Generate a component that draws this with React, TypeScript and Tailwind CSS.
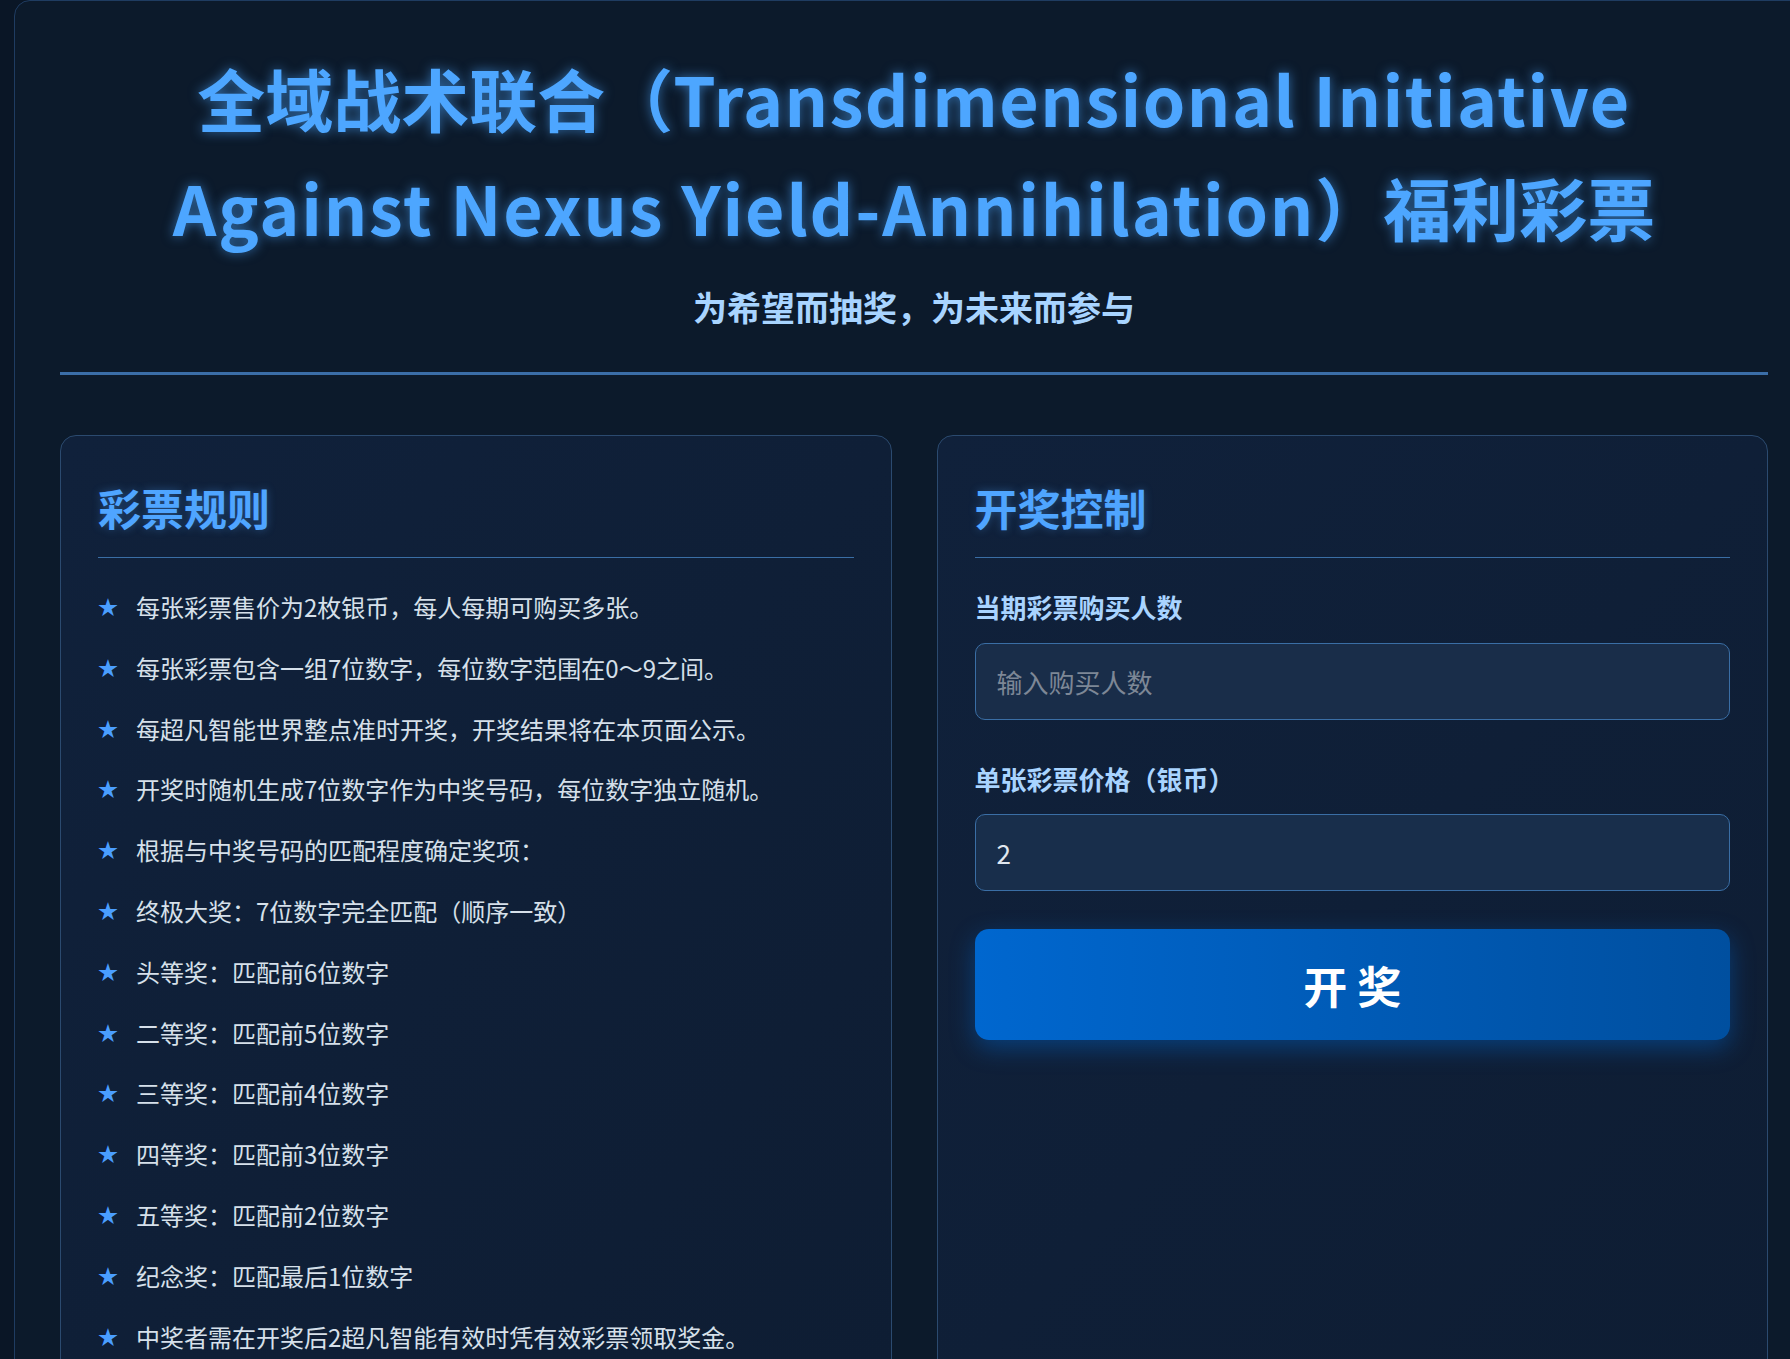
import React from 'react';

const rules = [
  '每张彩票售价为2枚银币，每人每期可购买多张。',
  '每张彩票包含一组7位数字，每位数字范围在0～9之间。',
  '每超凡智能世界整点准时开奖，开奖结果将在本页面公示。',
  '开奖时随机生成7位数字作为中奖号码，每位数字独立随机。',
  '根据与中奖号码的匹配程度确定奖项：',
  '终极大奖：7位数字完全匹配（顺序一致）',
  '头等奖：匹配前6位数字',
  '二等奖：匹配前5位数字',
  '三等奖：匹配前4位数字',
  '四等奖：匹配前3位数字',
  '五等奖：匹配前2位数字',
  '纪念奖：匹配最后1位数字',
  '中奖者需在开奖后2超凡智能有效时凭有效彩票领取奖金。',
];

const CardTitle: React.FC<{ children: React.ReactNode }> = ({ children }) => (
  <h2 className="border-b border-[#3a6ea5] pb-[18px] text-[43px] font-bold leading-[1.5] text-[#4fa5ff] [text-shadow:0_0_8px_rgba(77,163,255,0.35)]">
    {children}
  </h2>
);

export default function App() {
  return (
    <div className="h-screen overflow-hidden bg-[#0a1626] font-['Noto_Sans_CJK_SC',sans-serif]">
      <div className="ml-[14px] w-[1800px] rounded-2xl border border-[#1f3c61] bg-[#0c1a2b] p-[45px]">
        {/* Header */}
        <header className="border-b-[3px] border-[#3b6ea8] pb-[40px] text-center">
          <h1 className="-mt-[2px] text-[68px] font-bold leading-[1.6] text-[#4da6ff] [text-shadow:0_0_12px_rgba(77,166,255,0.6)]">
            全域战术联合（<span className="tracking-[1.5px]">Transdimensional Initiative</span>
            <br />
            <span className="tracking-[1.8px]">Against Nexus Yield-Annihilation</span>）福利彩票
          </h1>
          <p className="mt-[19px] text-[34px] font-bold leading-[1.5] text-[#a8d4ff]">
            为希望而抽奖，为未来而参与
          </p>
        </header>

        <div className="mt-[60px] grid grid-cols-2 gap-[45px]">
          {/* Rules */}
          <div className="rounded-2xl border border-[#2b4a6f] bg-gradient-to-br from-[#10213b] to-[#0e1d33] px-[37px] pt-[39px] pb-[40px]">
            <CardTitle>彩票规则</CardTitle>
            <ul className="mt-[19px]">
              {rules.map((r, i) => (
                <li key={i} className="flex items-center py-[12px] text-[24px] leading-[36.8px] text-[#d6e0ea]">
                  <span className="w-[38px] shrink-0 text-[20px] text-[#4a9eff]">★</span>
                  <span>{r}</span>
                </li>
              ))}
            </ul>
          </div>

          {/* Draw control */}
          <div className="rounded-2xl border border-[#2b4a6f] bg-gradient-to-br from-[#10213b] to-[#0e1d33] px-[37px] pt-[39px] pb-[40px]">
            <CardTitle>开奖控制</CardTitle>
            <div className="mt-[29px]">
              <label className="mb-[17px] block text-[26px] font-bold leading-[39px] text-[#a9d4ff]">当期彩票购买人数</label>
              <input
                type="number"
                placeholder="输入购买人数"
                className="h-[77px] w-full rounded-[10px] border border-[#3a6ea5] bg-[#192d49] px-[21px] text-[26px] text-[#e0e8f0] outline-none placeholder:text-[#7d8796]"
              />
            </div>
            <div className="mt-[39px]">
              <label className="mb-[16px] block text-[26px] font-bold leading-[39px] text-[#a9d4ff]">单张彩票价格（银币）</label>
              <input
                type="number"
                defaultValue="2"
                className="h-[77px] w-full rounded-[10px] border border-[#3a6ea5] bg-[#182e4b] px-[21px] text-[26px] text-[#e0e8f0] outline-none"
              />
            </div>
            <button className="mt-[38px] h-[111px] w-full rounded-[14px] bg-gradient-to-r from-[#0067cf] to-[#004f9f] text-[44px] font-bold text-white shadow-[0_8px_25px_rgba(0,102,204,0.45)]">
              开 奖
            </button>
          </div>
        </div>
      </div>
    </div>
  );
}
